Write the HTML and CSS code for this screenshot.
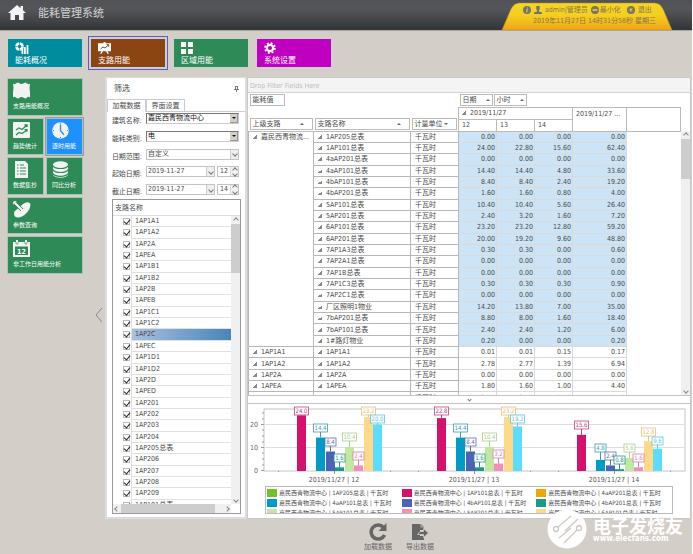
FILE: index.html
```html
<!DOCTYPE html>
<html lang="zh-CN">
<head>
<meta charset="utf-8">
<title>能耗管理系统</title>
<link rel="stylesheet" href="styles.css">
</head>
<body>
<header class="topbar">
  <svg class="home" viewBox="0 0 18 15"><path d="M9 0 0 8h2.5v7h4.500V10h4v5h4.500V8H18L15 5.300V1h-2.500v2.200z"/></svg>
  <h1>能耗管理系统</h1>
  <div class="account">
    <svg class="account-shape" viewBox="0 0 172 28" preserveAspectRatio="none"><defs><linearGradient id="gold" x2="0" y2="1"><stop offset="0" stop-color="#f5d522"/><stop offset=".45" stop-color="#f4cf20"/><stop offset="1" stop-color="#f0a416"/></linearGradient></defs><path d="M1 28 10 7Q13 1 18 1H154Q159 1 162 7L171 28z" fill="url(#gold)" stroke="#a88c2a" stroke-width=".5"/></svg>
    <div class="account-row">
      <svg class="dot" viewBox="0 0 8 8"><circle cx="4" cy="4" r="4"/><path d="M4.500 1.500v1M4.200 3.200 3.700 6.300" stroke="#f4d322" stroke-width="1.100"/></svg>
      <svg class="dot" viewBox="0 0 8 8"><path d="M2.300 0h3.400v3L5 4.500v1L8 6.500V8H0V6.500L3 5.500v-1L2.300 3z"/></svg>
      <span class="user">admin|管理员</span>
      <button class="link"><svg class="dot" viewBox="0 0 8 8"><circle cx="4" cy="4" r="4"/><path d="M1.500 4h5" stroke="#f4d322" stroke-width="1.500"/></svg>最小化</button>
      <button class="link exit"><svg class="dot" viewBox="0 0 8 8"><circle cx="4" cy="4" r="4"/><path d="m2.700 2.700 2.600 2.600m0-2.600L2.700 5.300" stroke="#f4d322" stroke-width="1.200"/></svg>退出</button>
    </div>
    <div class="clock">2019年11月27日 14时31分58秒 星期三</div>
  </div>
</header>

<nav class="modules">
  <a href="#" class="module teal"><svg viewBox="0 0 14 12"><circle cx="4.500" cy="4.500" r="3" fill="none" stroke="#fff" stroke-width="2.600" stroke-dasharray="4 .7"/><path d="M6.500 7h1.800v5H6.500zM9 5h1.800v7H9zM11.600 3h1.800v9h-1.800z"/></svg>能耗概况</a>
  <a href="#" class="module brown current"><svg viewBox="0 0 14 12"><path d="M5.500 0h2v1.200H13v8H9.500l1.500 2.600H9.500L8 9.200H5l-1.500 2.600H2l1.500-2.600H0v-8h5.500z"/><path d="m2.500 7 2.500-2 2 1 3.500-3M8.500 2.700h2.200v2" fill="none" stroke="#8b4513"/></svg>支路用能</a>
  <a href="#" class="module green"><svg viewBox="0 0 14 12"><path d="M0 0h5v5H0zM7 0h5v5H7zM0 7h5v5H0zM7 7h5v5H7z"/></svg>区域用能</a>
  <a href="#" class="module purple"><svg viewBox="0 0 14 12"><circle cx="6" cy="6" r="3.200" fill="none" stroke="#fff" stroke-width="2.200"/><circle cx="6" cy="6" r="5" fill="none" stroke="#fff" stroke-width="1.600" stroke-dasharray="2 1.930"/></svg>系统设置</a>
</nav>

<div class="workspace">
  <nav class="side">
    <a href="#" class="wide"><svg viewBox="0 0 18 17"><path d="M0 1.500Q1 3 3 1.500T6 1q2.500 2 5 0 1-1 3 .5T17 1.500L16.500 6l.5 4v5.500q-2-1.500-3 0t-3 .5q-2.500-2-5 0-1 1-3-.5t-3 0V10l.5-4z"/></svg>支路用能概况</a>
    <a href="#"><svg viewBox="0 0 18 17"><rect width="17" height="16" rx="1"/><path d="m3 8 3-2 3 1.500L14 3M3 13l3-2.500 3 1L14 8M11.500 3H14v2M11.500 7.700H14v2" fill="none" stroke="#2e8b57" stroke-width="1.300"/></svg>趋势统计</a>
    <a href="#" class="current"><svg viewBox="0 0 18 17"><circle cx="8.500" cy="8.500" r="8.300"/><path d="M8.500 2.500v6.300l3.500 4" fill="none" stroke="#1e90ff" stroke-width="1.300"/><path d="M8.500.8v1M8.500 15v1M1 8.500h1M15 8.500h1" stroke="#1e90ff"/></svg>逐时用能</a>
    <a href="#"><svg viewBox="0 0 18 17"><path d="M2 0h10l3 3v14H2z"/><path d="M4 4h1.500M7 4h4M4 7h1.500M7 7h6M4 10h1.500M7 10h6M4 13h1.500M7 13h6" stroke="#2e8b57" stroke-width="1.200"/></svg>数据集抄</a>
    <a href="#"><svg viewBox="0 0 18 17"><path d="M1 3.500v10a7.500 3.200 0 0 0 15 0v-10z"/><ellipse cx="8.500" cy="3.500" rx="7.500" ry="3.300"/><path d="M1 4.500a7.500 3 0 0 0 15 0M1 8.500a7.500 3 0 0 0 15 0M1 12.300a7.500 3 0 0 0 15 0" fill="none" stroke="#2e8b57" stroke-width="1.200"/></svg>同比分析</a>
    <a href="#" class="wide"><svg viewBox="0 0 18 17"><path d="M10 3q5-3 7-.5 1.500 4-3 9-5 5.500-10 5-4-1-2.500-6z"/><circle cx="2" cy="2" r="2"/><path d="m2 2 7 7" stroke="#2e8b57" stroke-width="3.500"/><path d="m2 2 7.500 7.500" stroke="#fff" stroke-width="1.800"/></svg>参数查询</a>
    <a href="#" class="wide"><svg viewBox="0 0 18 17"><path d="M0 2h17v15H0zM3 0h2v3H3zM12 0h2v3h-2z"/><path d="M2 6.500h13v8.500H2z" fill="#2e8b57"/><path d="M3 2v2h2V2M12 2v2h2V2" fill="none" stroke="#2e8b57" stroke-width=".6"/><text x="8.500" y="13.500" text-anchor="middle">12</text></svg>非工作日用能分析</a>
  </nav>

  <button class="collapse" aria-label="收起"><svg viewBox="0 0 8 16"><path d="M7 1 1 8l6 7" fill="none" stroke="#888"/></svg></button>

  <section class="filter">
    <div class="filter-title"><h2>筛选</h2><svg viewBox="0 0 5 6"><path d="M1 .5h3M1.500 1v2.500M3.500 1v2.500M0 3.500h5M2.500 4v2" stroke="#555" fill="none" stroke-width=".8"/></svg></div>
    <div class="tabs"><button class="active">加载数据</button><button>界面设置</button></div>
    <form class="fields">
      <label for="building">建筑名称:</label>
      <div class="combo classic"><select id="building"><option>嘉民西青物流中心</option></select><i></i></div>
      <label for="kind">能耗类别:</label>
      <div class="combo classic"><select id="kind"><option>电</option></select><i></i></div>
      <label for="range">日期范围:</label>
      <div class="combo flat"><select id="range"><option>自定义</option></select><i></i></div>
      <label for="from">起始日期:</label>
      <div class="when"><div class="combo flat"><input id="from" value="2019-11-27"><i></i></div><div class="spin"><input type="number" aria-label="起始小时" value="12"><i></i></div></div>
      <label for="to">截止日期:</label>
      <div class="when"><div class="combo flat"><input id="to" value="2019-11-27"><i></i></div><div class="spin"><input type="number" aria-label="截止小时" value="14"><i></i></div></div>
    </form>
    <div class="tree">
      <div class="tree-head">支路名称</div>
      <div class="tree-body">
        <ul id="branches"></ul>
        <div class="vscroll"><i class="up"></i><b></b><i class="down"></i></div>
      </div>
      <div class="hscroll"><i class="left"></i><b></b><i class="right"></i></div>
    </div>
  </section>

  <main class="report">
    <div class="dropzone">Drop Filter Fields Here</div>
    <div class="pivot">
      <div class="pivot-clip">
        <table>
          <colgroup><col class="c-parent"><col class="c-name"><col class="c-unit"><col class="c-num"><col class="c-num"><col class="c-num"><col class="c-sum"><col></colgroup>
          <thead>
            <tr class="areas"><th colspan="3"><button class="field value">能耗值</button></th><th colspan="5"><div class="pair"><button class="field">日期<i class="asc"></i></button><button class="field">小时<i class="asc"></i></button></div></th></tr>
            <tr class="days">
              <th rowspan="2" class="rowfield"><button class="field">上级支路<i class="asc"></i></button></th>
              <th rowspan="2" class="rowfield"><button class="field">支路名称<i class="asc"></i></button></th>
              <th rowspan="2" class="rowfield"><button class="field">计量单位<i class="desc"></i></button></th>
              <th colspan="3" class="colhead"><i class="node"></i>2019/11/27</th><th rowspan="2" class="colhead total">2019/11/27 ...</th><th rowspan="2" class="colhead"></th>
            </tr>
            <tr class="hours"><th class="colhead">12</th><th class="colhead">13</th><th class="colhead">14</th></tr>
          </thead>
          <tbody id="rows"></tbody>
        </table>
      </div>
      <div class="vscroll"><i class="up"></i><b></b><i class="down"></i></div>
    </div>
    <div class="splitter"><i></i></div>
    <div class="chart">
      <svg id="plot" viewBox="248 404 442 82"></svg>
      <div class="legend" id="legend"></div>
    </div>
  </main>
</div>

<footer class="actions">
  <button><svg viewBox="0 0 18 18"><path d="M14.500 4.500A7 7 0 1 0 15.500 12" fill="none" stroke="#666" stroke-width="3.600"/><path d="M17.500 0v8H9.500z"/></svg>加载数据</button>
  <button><svg viewBox="0 0 18 18"><path d="M1 1h9l3 3v3H9v6h4v4H1z"/><path d="M9 8.500h3.500V5.500L17.500 10l-5 4.500V11.500H6.500z" stroke="#d4cec8" stroke-width=".8"/><path d="M10 1v3h3" fill="none" stroke="#d4cec8" stroke-width=".8"/></svg>导出数据</button>
</footer>

<div class="brand">
  <svg viewBox="0 0 40 40"><circle cx="20" cy="20" r="19.500" fill="#fff"/><g fill="none" stroke="#cfc9c1" stroke-width="1.300"><circle cx="9" cy="20" r="2.500"/><path d="M11 18 24 7"/><circle cx="32" cy="19" r="2.500"/><path d="M30 21 17 34M12 29 24 19M18 22 31 10"/></g></svg>
  <div><strong>电子发烧友</strong><span>www.elecfans.com</span></div>
</div>
<script src="app.js"></script>
</body>
</html>
```

FILE: styles.css
```css
* { box-sizing: border-box; }
body {
  margin: 0; min-height: 100vh; display: flex; flex-direction: column; position: relative;
  background: #d4cec8; color: #4a4a4a; border-right: 1px solid #fff;
  font: 7px/10px "DejaVu Sans Condensed", "Noto Sans", "Noto Sans CJK SC", sans-serif;
}
button, input, select { font: inherit; color: inherit; border: 0; padding: 0; margin: 0; background: none; border-radius: 0; }
button { white-space: nowrap; }
a { color: inherit; text-decoration: none; }
h1, h2 { margin: 0; font-weight: 400; }
ul { margin: 0; padding: 0; list-style: none; }
i { font-style: normal; }
svg { display: block; flex: none; }

.topbar { height: 31px; display: flex; align-items: flex-start; padding-left: 8px; background: linear-gradient(#515256, #55565a 30%, #34373a 95%); border-bottom: 1px solid #aaa7a2; }
.home { width: 18px; height: 15px; margin-top: 5px; fill: #f4f4f4; }
.topbar h1 { margin: 6px 0 0 12px; font-size: 11px; line-height: 16px; color: #d2d2d2; }
.account { position: relative; width: 172px; height: 30px; margin: 0 19px 0 auto; padding: 5px 17px 0 0; color: #8a7650; }
.account-shape { position: absolute; left: 0; bottom: 0; width: 100%; height: 28px; }
.account-row { position: relative; display: flex; align-items: center; padding-left: 22px; gap: 3px; white-space: nowrap; }
.dot { width: 8px; height: 8px; fill: #77736c; }
.link { display: flex; align-items: center; gap: 1px; }
.exit { gap: 3px; margin-left: 3px; }
.clock { position: relative; text-align: right; margin-top: 1px; white-space: nowrap; }

.modules { display: flex; gap: 7px; padding: 7px 7px 0; }
.module { width: 76px; height: 30px; padding: 3px 7px 0; color: #fff; font-size: 8px; line-height: 13px; border: 1px solid #c9d3cd; outline-offset: 1px; }
.module svg { width: 14px; height: 12px; fill: #fff; }
.teal { background: #008b9e; }
.brown { background: #8b4513; }
.green { background: #2e8b57; }
.purple { background: #c000c0; }
.module.current { outline: 1px solid #5a5ad8; }

.workspace { flex: 1; display: flex; align-items: stretch; margin-top: 9px; padding-right: 1px; }
.side { width: 83px; height: 197px; padding: 1px 0 0 7px; display: grid; grid-template-columns: 1fr 1fr; grid-auto-rows: 1fr; gap: 2px; }
.side a { background: #2e8b57; color: #fff; border: 1px solid #a9c4b4; padding: 3px 5px 0; font-size: 6px; line-height: 9px; white-space: nowrap; }
.side .wide { grid-column: span 2; }
.side .current { background: #1e90ff; outline: 1px solid #9d9a96; }
.side svg { width: 18px; height: 17px; fill: #f2f2f2; margin-bottom: 2px; }
.side text { font-size: 7px; font-weight: 700; fill: #fff; }
.collapse { width: 22px; padding: 34px 0 0 12px; }
.collapse svg { width: 8px; height: 16px; }

.filter { width: 142px; display: flex; flex-direction: column; background: #fff; border: 2px solid #dcdcdc; border-top-width: 1px; padding: 0 4px 3px 5px; }
.filter-title { display: flex; align-items: center; justify-content: space-between; padding: 6px 2px 0; }
.filter-title h2 { font-size: 8px; }
.filter-title svg { width: 5px; height: 6px; }
.tabs { display: flex; margin: 5px -4px 0 -5px; height: 13px; border-bottom: 1px solid #ccc; }
.tabs button { width: 39px; height: 12px; border: 1px solid #ccc; border-bottom: 0; background: #fff; }
.tabs .active { height: 13px; }
.fields { height: 82px; margin: 1px 0 4px -2px; display: grid; grid-template-columns: 32px 1fr; column-gap: 4px; align-content: space-between; padding-right: 2px; }
.fields label { text-align: right; line-height: 16px; height: 11px; }
.combo { position: relative; display: flex; height: 11px; background: #fff; flex: 1; border: 1px solid #c4c4c4; }
.combo select, .combo input { appearance: none; flex: 1; min-width: 0; width: 0; height: 9px; line-height: 9px; padding: 0 1px; outline: 0; }
.combo i { width: 8px; display: grid; place-items: center; }
.classic { border-color: #777 #ccc #ccc #777; color: #111; }
.classic i { background: #d4d0c8; border: 1px solid #999; border-width: 0 1px 1px 0; }
.classic i::before { content: ""; border: 2px solid transparent; border-top-color: #111; border-bottom: 0; }
.flat i { background: #eee; border-left: 1px solid #ccc; }
.flat i::before, .spin i::after, .splitter i { content: ""; width: 3px; height: 3px; border: solid #777; border-width: 0 1px 1px 0; transform: rotate(45deg); }
.when { display: flex; gap: 2px; }
.spin { width: 22px; height: 11px; display: flex; border: 1px solid #c4c4c4; }
.spin input { appearance: textfield; flex: 1; width: 0; height: 9px; line-height: 9px; padding-left: 2px; }
.spin input::-webkit-inner-spin-button { display: none; }
.spin i { width: 8px; background: #f2f2f2; display: grid; place-items: center; align-content: space-evenly; border-left: 1px solid #ddd; }
.spin i::before { content: ""; width: 3px; height: 3px; border: solid #777; border-width: 1px 0 0 1px; transform: rotate(45deg); }

.tree { flex: 1; display: flex; flex-direction: column; border: 1px solid #999; }
.tree-head { height: 16px; line-height: 16px; padding-left: 2px; border-bottom: 1px solid #ddd; }
.tree-body { flex: 1 0 0; min-height: 0; display: flex; overflow: hidden; }
.tree ul { flex: 1; height: 295px; padding-left: 10px; display: grid; grid-auto-rows: 1fr; }
.tree li { display: flex; min-height: 0; }
.tree li input { appearance: none; width: 7px; height: 7px; margin: 2px 1px 0 0; border: 1px solid #bbb; background: #fff; position: relative; }
.tree li input:checked::after { content: ""; position: absolute; left: 1px; top: -1px; width: 3px; height: 5px; border: solid #222; border-width: 0 1px 1px 0; transform: rotate(40deg); }
.tree li label { flex: 1; padding-left: 3px; border: solid #e0e0e0; border-width: 0 0 1px 1px; line-height: 11px; }
.tree li.selected label { background: linear-gradient(90deg, #a9c0de, #4a84b8); }

.vscroll { width: 9px; background: #f0f0f0; display: flex; flex-direction: column; align-items: center; }
.vscroll b { width: 100%; background: #cdcdcd; }
.vscroll i, .hscroll i { width: 8px; height: 8px; display: grid; place-items: center; }
.vscroll i::before, .hscroll i::before { content: ""; width: 3px; height: 3px; border: solid #888; border-width: 1px 0 0 1px; }
.up::before { transform: rotate(45deg); }
.down::before { transform: rotate(225deg); }
.left::before { transform: rotate(-45deg); }
.right::before { transform: rotate(135deg); }
.down { margin-top: auto; }
.tree .vscroll b { height: 49px; }
.hscroll { height: 9px; margin-right: 9px; background: #f0f0f0; display: flex; align-items: center; }
.hscroll b { width: 94px; height: 100%; background: #cdcdcd; }
.right { margin-left: auto; }

.report { flex: 1; min-width: 0; background: #fff; border: 1px solid #c9c9c9; display: flex; flex-direction: column; }
.dropzone { height: 15px; line-height: 16px; padding-left: 2px; background: #f4f4f4; color: #bdbdbd; border-bottom: 1px solid #d5d5d5; }
.pivot { flex: 1 0 0; min-height: 0; display: flex; overflow: hidden; }
.pivot-clip { flex: 1; min-width: 0; overflow: hidden; }
.pivot .vscroll { margin-top: 38px; }
.pivot .vscroll b { height: 40px; }
table { width: 100%; height: 311px; table-layout: fixed; border-collapse: collapse; }
.c-parent { width: 65px; } .c-name { width: 97px; } .c-unit { width: 48px; } .c-num { width: 38px; } .c-sum { width: 54px; }
th { font-weight: 400; text-align: left; padding: 0; }
.areas { height: 14px; } .days, .hours { height: 12px; }
.areas th { padding: 0 1px; }
.pair { display: flex; gap: 1px; }
.field { display: flex; align-items: center; justify-content: space-between; height: 12px; width: 33px; padding: 0 2px; border: 1px solid #bbb; background: #fff; line-height: 10px; }
.field.value { width: 35px; }
.rowfield { vertical-align: bottom; padding: 0 1px 1px; border-bottom: 1px solid #bbb; }
.rowfield .field { width: 100%; }
.rowfield .field i { margin-right: 6px; }
.asc, .desc { border: 2px solid transparent; border-top: 0; border-bottom-color: #666; }
.desc { border-top: 2px solid #666; border-bottom: 0; }
.colhead { border: 1px solid #bbb; padding-left: 3px; }
.total { vertical-align: top; line-height: 12px; }
td { border: 1px solid #b8b8b8; padding: 0 1px 0 4px; white-space: nowrap; overflow: hidden; line-height: 10px; }
td[rowspan] { vertical-align: top; }
.num { border-color: #dadada; text-align: right; padding-left: 0; }
.num.first { border-left-color: #b8b8b8; }
.picked .num { background: #cce4f6; }
.rest { border: 0; }
.node { display: inline-block; width: 4px; height: 4px; margin-right: 4px; background: linear-gradient(135deg, transparent 50%, #888 50%); }
.splitter { height: 9px; border: solid #c4c4c4; border-width: 1px 0; display: grid; place-items: center; }

.chart { padding-bottom: 4px; }
.chart svg { width: 100%; }
.legend { height: 28px; margin: 0 17px; border: 1px solid #bbb; padding: 1px 1px 0; overflow: hidden; display: grid; grid-template-columns: repeat(3, 1fr); grid-auto-rows: 10px; }
.legend div { display: flex; align-items: center; gap: 2px; font-size: 6px; white-space: nowrap; }
.legend i { width: 10px; height: 8px; }

.actions { height: 35px; display: flex; justify-content: center; gap: 14px; padding: 4px 0 0 106px; }
.actions button { display: flex; flex-direction: column; align-items: center; height: 30px; color: #666; gap: 1px; }
.actions svg { width: 18px; height: 18px; fill: #666; }

.brand { position: absolute; right: 9px; bottom: 5px; display: flex; gap: 6px; color: #fff; }
.brand svg { width: 40px; height: 40px; }
.brand div { padding-top: 10px; }
.brand strong { display: block; font-size: 18px; line-height: 15px; }
.brand span { display: block; font-size: 8px; line-height: 10px; font-weight: 700; }
```

FILE: app.js
```js
const branches = ['1AP1A1', '1AP1A2', '1AP2A', '1APEA', '1AP1B1', '1AP1B2', '1AP2B', '1APEB', '1AP1C1', '1AP1C2', '1AP2C', '1APEC', '1AP1D1', '1AP1D2', '1AP2D', '1APED', '1AP201', '1AP202', '1AP203', '1AP204', '1AP205总表', '1AP206', '1AP207', '1AP208', '1AP209', '1AP101总表'];
document.getElementById('branches').innerHTML = branches.map((name, i) =>
  `<li class="${name === '1AP2C' ? 'selected' : ''}"><input type="checkbox" id="b${i}" checked><label for="b${i}">${name}</label></li>`).join('');

const centre = [
  ['1AP205总表', '0.00', '0.00', '0.00', '0.00'], ['1AP101总表', '24.00', '22.80', '15.60', '62.40'],
  ['4aAP201总表', '0.00', '0.00', '0.00', '0.00'], ['4aAP101总表', '14.40', '14.40', '4.80', '33.60'],
  ['4bAP101总表', '8.40', '8.40', '2.40', '19.20'], ['4bAP201总表', '1.60', '1.60', '0.80', '4.00'],
  ['5AP101总表', '10.40', '10.40', '5.60', '26.40'], ['5AP201总表', '2.40', '3.20', '1.60', '7.20'],
  ['6AP101总表', '23.20', '23.20', '12.80', '59.20'], ['6AP201总表', '20.00', '19.20', '9.60', '48.80'],
  ['7AP1A3总表', '0.30', '0.30', '0.00', '0.60'], ['7AP2A1总表', '0.00', '0.00', '0.00', '0.00'],
  ['7AP1B总表', '0.00', '0.00', '0.00', '0.00'], ['7AP1C3总表', '0.30', '0.30', '0.30', '0.90'],
  ['7AP2C1总表', '0.00', '0.00', '0.00', '0.00'], ['厂区照明1物业', '14.20', '13.80', '7.00', '35.00'],
  ['7bAP201总表', '8.80', '8.00', '1.60', '18.40'], ['7bAP101总表', '2.40', '2.40', '1.20', '6.00'],
  ['1#路灯物业', '0.20', '0.00', '0.00', '0.20']];
const others = [['1AP1A1', '0.01', '0.01', '0.15', '0.17'], ['1AP1A2', '2.78', '2.77', '1.39', '6.94'],
  ['1AP2A', '0.00', '0.00', '0.00', '0.00'], ['1APEA', '1.80', '1.60', '1.00', '4.40'], ['1AP1B1', '3.45', '3.40', '2.70', '10.40']];
const node = '<i class="node"></i>';
const cells = r => `<td>${node}${r[0]}</td><td>千瓦时</td>` +
  r.slice(1).map((v, i) => `<td class="num${i ? '' : ' first'}">${v}</td>`).join('') + '<td class="rest"></td>';
document.getElementById('rows').innerHTML =
  centre.map((r, i) => `<tr class="picked">${i ? '' : `<td rowspan="${centre.length}">${node}嘉民西青物流...</td>`}${cells(r)}</tr>`).join('') +
  others.map(r => `<tr><td>${node}${r[0]}</td>${cells(r)}</tr>`).join('');

const series = [['1AP205', '#6fc02a'], ['1AP101', '#d4126e'], ['4aAP201', '#eea600'], ['4aAP101', '#009cc6'], ['4bAP101', '#4a63b8'],
  ['4bAP201', '#189c88'], ['5AP101', '#c0e8a0'], ['5AP201', '#f48cbc'], ['6AP101', '#ffd98a']];
document.getElementById('legend').innerHTML = series.map(([name, colour]) =>
  `<div><i style="background:${colour}"></i>嘉民西青物流中心 | ${name}总表 | 千瓦时</div>`).join('');

// Bars: x offset in the group, fill, label colour, then [value, label top] for each hour.
const bars = [
  [297, '#d4126e', '#c2407c', [24, 407], [22.8, 407], [15.6, 421]],
  [316, '#009cc6', '#3a9dba', [14.4, 424], [14.4, 424], [4.8, 444]],
  [326, '#4a63b8', '#5c6fb0', [8.4, 438], [8.4, 438], [2.4, 452]],
  [335, '#189c88', '#2c9383', [1.6, 454], [1.6, 454], [0.8, 456]],
  [345, '#c0e8a0', '#a9cf8b', [10.4, 433], [10.4, 433], [5.6, 444]],
  [354, '#f48cbc', '#dd7eab', [2.4, 452], [3.2, 450], [1.6, 454]],
  [364, '#ffd98a', '#e5c078', [23.2, 407], [23.2, 407], [12.8, 428]],
  [373, '#5cdcff', '#58c4e2', [20, 415], [19.2, 415], [9.6, 437]]];
let art = '<rect x="264" y="409" width="421" height="62" fill="none" stroke="#c4c4c4"/><path d="M264 424.500h421M264 447.500h421" stroke="#dedede" fill="none"/><path d="M261 424.500h3M261 447.500h3M261 470.500h3M262 413h2M262 419h2M262 430h2M262 436h2M262 442h2M262 453h2M262 459h2M262 465h2M334.500 471v3M474.500 471v3M614.500 471v3M278.500 471v1M390.500 471v1M418.500 471v1M530.500 471v1M558.500 471v1M670.500 471v1" stroke="#999"/>';
[['20', 427], ['10', 450], ['0', 473]].forEach(([t, y]) => { art += `<text x="258" y="${y}" text-anchor="end" font-size="7" fill="#666">${t}</text>`; });
['12', '13', '14'].forEach((h, g) => {
  art += `<text x="${334 + g * 140}" y="482" text-anchor="middle" font-size="7" fill="#555">2019/11/27 | ${h}</text>`;
  bars.forEach(b => { const top = 471 - b[3 + g][0] * 2.32; art += `<rect x="${b[0] + g * 140}" y="${top}" width="9" height="${471 - top}" fill="${b[1]}"/>`; });
  bars.forEach(b => {
    const [v, y] = b[3 + g], cx = b[0] + g * 140 + 4.5, w = v >= 10 ? 14 : 11, top = 471 - v * 2.32;
    if (top > y + 8) art += `<path d="M${cx} ${y + 8}V${top}" stroke="${b[2]}"/>`;
    art += `<rect x="${cx - w / 2}" y="${y}" width="${w}" height="8" fill="#fff" stroke="${b[2]}" stroke-width=".8"/><text x="${cx}" y="${y + 6}" text-anchor="middle" font-size="6" fill="${b[2]}">${v.toFixed(1)}</text>`;
  });
});
document.getElementById('plot').innerHTML = art;
```
